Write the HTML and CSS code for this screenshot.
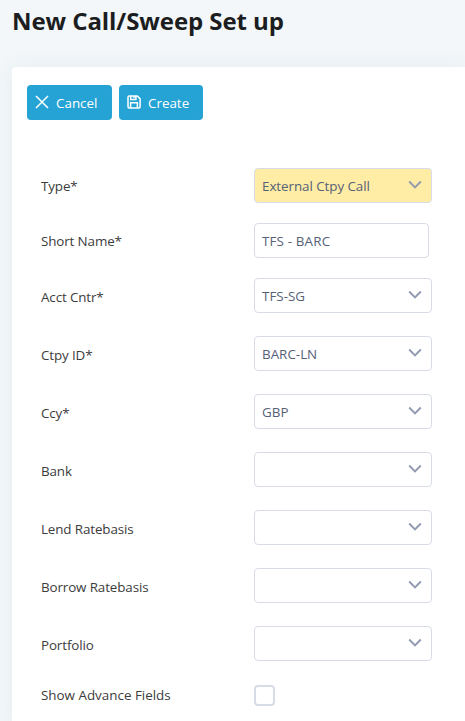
FILE: index.html
```html
<!DOCTYPE html>
<html lang="en">
<head>
<meta charset="utf-8">
<title>New Call/Sweep Set up</title>
<link rel="stylesheet" href="styles.css">
</head>
<body>
<svg class="defs" aria-hidden="true"><symbol id="chevron" viewBox="0 0 14 9"><path d="M1.2 1.5 7 7.3l5.8-5.8"/></symbol></svg>
<h1 class="title">New Call/Sweep Set up</h1>
<main class="card">
  <div class="toolbar">
    <button class="btn btn-cancel"><svg class="icon" viewBox="0 0 14 14"><path d="M1 1l12 12M13 1 1 13"/></svg><span>Cancel</span></button>
    <button class="btn btn-create"><svg class="icon" viewBox="0 0 14 14"><path d="M2.2 1h8l2.9 2.7v8.1q0 1.2-1.2 1.2H2.2Q1 13 1 11.8V2.2Q1 1 2.2 1zM3.7 1v3.6h5.2V1M7 1.5v1.6M3.6 13V7.7h6.8V13"/></svg><span>Create</span></button>
  </div>
  <form class="form">
    <div class="row"><label class="label">Type*</label><div class="select filled"><span>External Ctpy Call</span><svg class="chevron"><use href="#chevron"/></svg></div></div>
    <div class="row"><label class="label">Short Name*</label><div class="select text"><span>TFS - BARC</span></div></div>
    <div class="row wide"><label class="label low">Acct Cntr*</label><div class="select"><span>TFS-SG</span><svg class="chevron"><use href="#chevron"/></svg></div></div>
    <div class="row wide"><label class="label low">Ctpy ID*</label><div class="select"><span>BARC-LN</span><svg class="chevron"><use href="#chevron"/></svg></div></div>
    <div class="row wide"><label class="label low">Ccy*</label><div class="select"><span>GBP</span><svg class="chevron"><use href="#chevron"/></svg></div></div>
    <div class="row wide"><label class="label low">Bank</label><div class="select"><span></span><svg class="chevron"><use href="#chevron"/></svg></div></div>
    <div class="row wide"><label class="label low">Lend Ratebasis</label><div class="select"><span></span><svg class="chevron"><use href="#chevron"/></svg></div></div>
    <div class="row wide"><label class="label low">Borrow Ratebasis</label><div class="select"><span></span><svg class="chevron"><use href="#chevron"/></svg></div></div>
    <div class="row wide"><label class="label low">Portfolio</label><div class="select"><span></span><svg class="chevron"><use href="#chevron"/></svg></div></div>
    <div class="row check"><label class="label">Show Advance Fields</label><span class="checkbox"></span></div>
  </form>
</main>
</body>
</html>
```
FILE: styles.css
```css
* { box-sizing: border-box; }
html { overflow: hidden; }
body { margin: 0; height: 721px; overflow: hidden; background: #f3f7fa; font: 400 13.4px/20px "Open Sans", "Noto Sans", sans-serif; color: #3c3c3c; }
.defs { display: none; }
.title { margin: 0; height: 67px; padding: 5px 0 0 12px; font: 700 24px/32px "Open Sans", sans-serif; letter-spacing: -.07px; color: #1b1d20; white-space: nowrap; }
.card { margin-left: 12px; height: 660px; padding: 18px 0 0 15px; background: #fff; border-radius: 4px 0 0 0; box-shadow: 0 0 20px rgba(40, 80, 95, .07); }
.toolbar { display: flex; gap: 7px; }
.btn { display: flex; align-items: center; gap: 7px; height: 35px; padding: 0 0 0 8px; border: 0; border-radius: 4px; background: #26a3d5; color: #fff; font: 400 13.4px/20px "Open Sans", sans-serif; }
.btn span { padding-top: 1px; }
.btn-cancel { width: 85px; }
.btn-create { width: 84px; }
.icon { width: 14px; height: 14px; margin-top: -1px; fill: none; stroke: #fff; stroke-width: 1.5; }
.form { padding: 48px 0 0 14px; }
.row { display: flex; margin-bottom: 20px; }
.wide { margin-bottom: 23px; }
.label { width: 213px; padding-top: 8px; letter-spacing: -.12px; white-space: nowrap; }
.low { padding-top: 9px; }
.select { display: flex; justify-content: space-between; width: 178px; height: 35px; padding: 7px 9px 0 7px; border: 1px solid #d8dce8; border-radius: 4px; background: #fff; color: #566178; white-space: nowrap; }
.text { width: 175px; }
.filled { background: #ffeca5; }
.filled span { letter-spacing: -.06px; }
.text span { letter-spacing: .15px; }
.chevron { width: 14px; height: 9px; margin-top: 4px; fill: none; stroke: #9299b0; stroke-width: 1.9; }
.check .label { padding-top: 1px; letter-spacing: 0; }
.checkbox { width: 21px; height: 21px; margin-top: 1px; border: 2px solid #d8dce6; border-radius: 4px; background: #fff; }
```
